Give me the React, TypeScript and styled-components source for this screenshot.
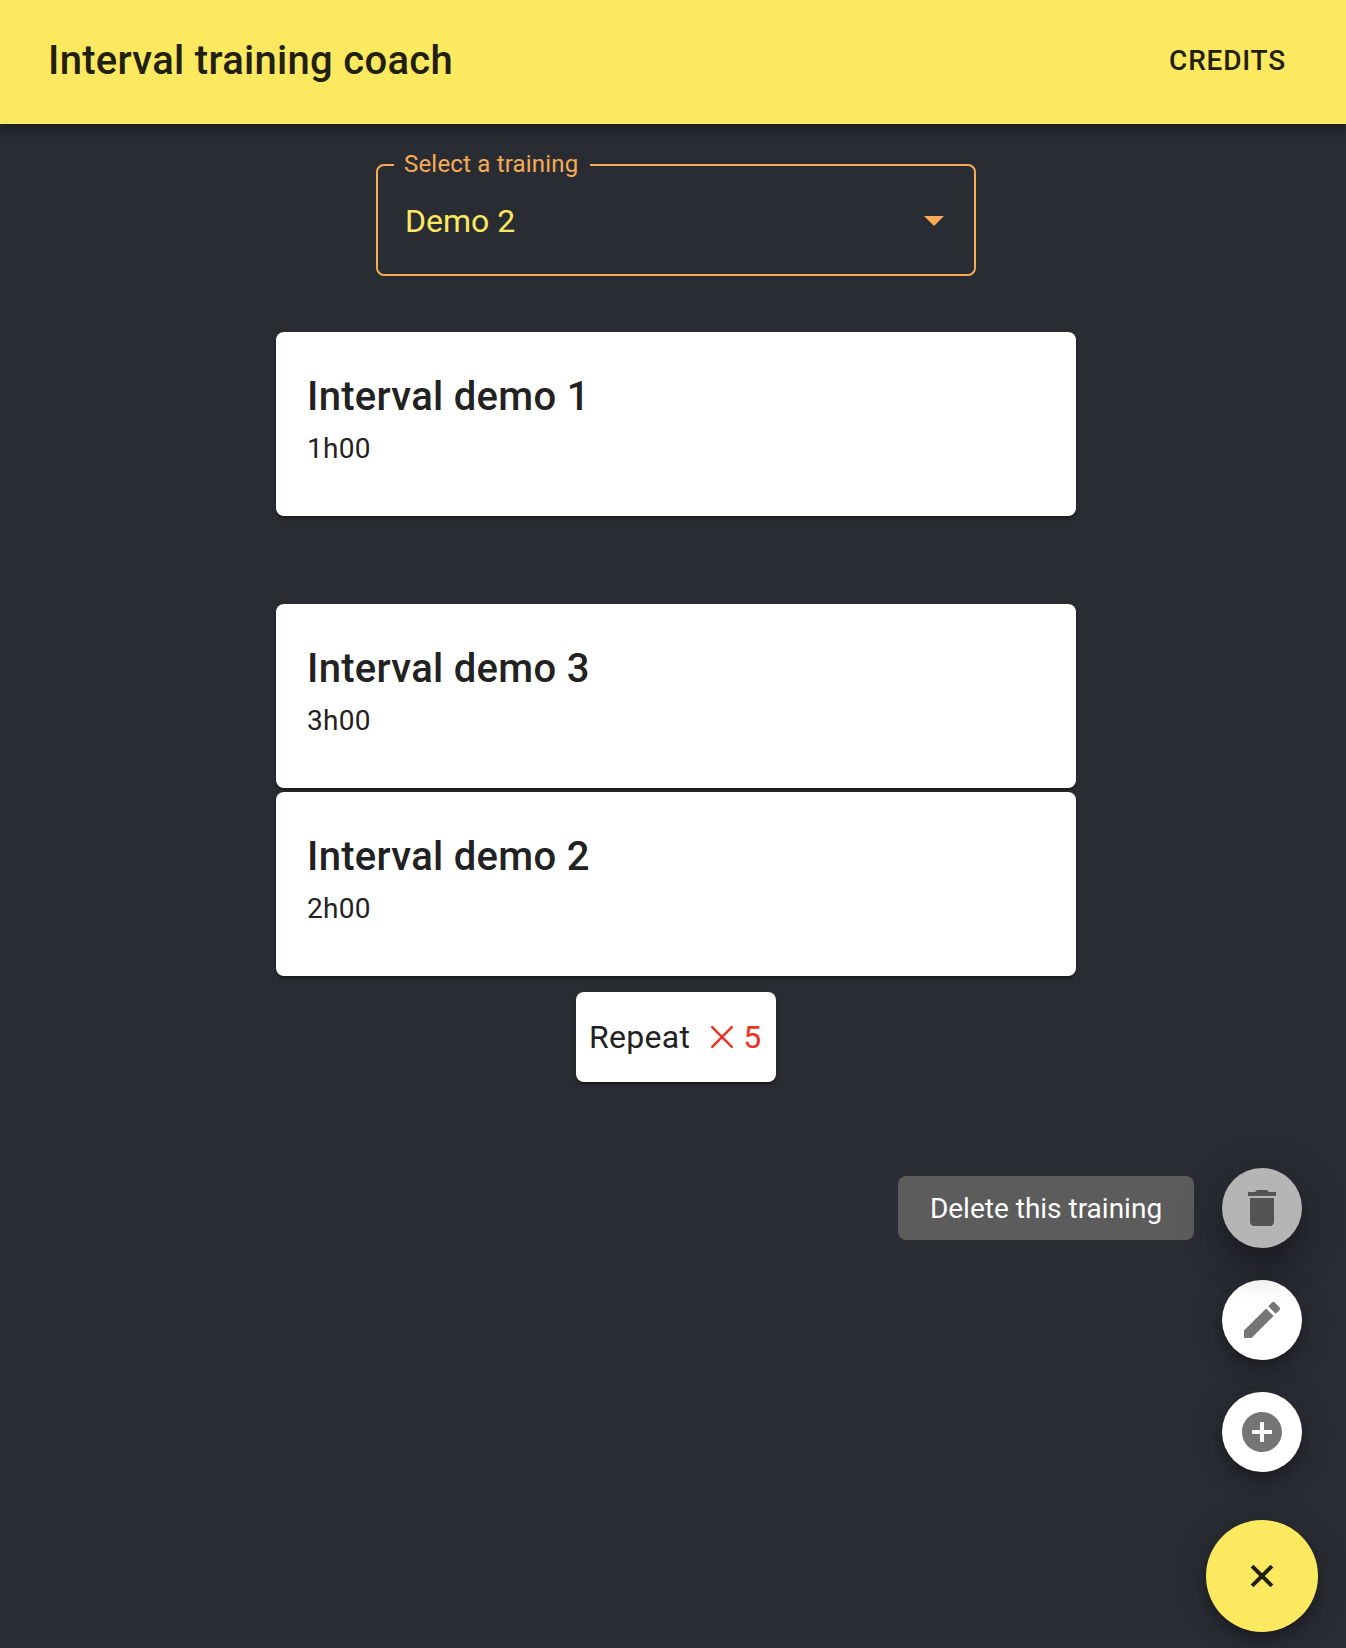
import React from "react";
import styled, { createGlobalStyle, css } from "styled-components";

const colors = {
  primary: "#fde960",
  secondary: "#f5ac52",
  background: "#2a2c34",
  text: "#222222",
  onPrimary: "#21200c",
  danger: "#ee3324",
};

const GlobalStyle = createGlobalStyle`
  *, *::before, *::after { box-sizing: border-box; }
  body {
    margin: 0;
    background: ${colors.background};
    color: ${colors.text};
    font-family: Roboto, "Liberation Sans", sans-serif;
    -webkit-font-smoothing: antialiased;
    overflow: hidden;
  }
`;

const Page = styled.div`
  position: relative;
  height: 1648px;
  width: 100%;
  overflow: hidden;
`;

const AppBar = styled.header`
  display: flex;
  align-items: center;
  justify-content: space-between;
  height: 124px;
  padding: 0 44px 3px 48px;
  background: ${colors.primary};
  color: ${colors.onPrimary};
  box-shadow: 0 4px 8px -2px rgba(0, 0, 0, 0.2), 0 8px 10px 0 rgba(0, 0, 0, 0.14),
    0 2px 20px 0 rgba(0, 0, 0, 0.12);
`;

const heading = css`
  margin: 0;
  font-size: 40px;
  font-weight: 500;
  line-height: 64px;
  letter-spacing: 0.0075em;
`;

const AppTitle = styled.h1`
  ${heading}
  padding-top: 1px;
`;

const CreditsButton = styled.button`
  border: 0;
  background: none;
  color: inherit;
  padding: 12px 16px 13px;
  font: 500 28px/49px Roboto, "Liberation Sans", sans-serif;
  letter-spacing: 0.02857em;
  text-transform: uppercase;
`;

const Main = styled.main`
  display: flex;
  flex-direction: column;
  align-items: center;
  padding: 31px 0 0 6px;
`;

const SelectField = styled.fieldset`
  width: 600px;
  height: 121px;
  margin: 0;
  padding: 0 30px 0 27px;
  border: 2px solid ${colors.secondary};
  border-radius: 8px;
`;

const SelectLabel = styled.legend`
  margin-left: -11px;
  padding: 0 11px 2px 10px;
  color: ${colors.secondary};
  font-size: 24px;
  line-height: 18px;
  letter-spacing: 0.008em;
  width: 196px;
  white-space: nowrap;
`;

const SelectRow = styled.div`
  display: flex;
  align-items: center;
  justify-content: space-between;
  height: 92px;
`;

const SelectValue = styled.span`
  color: ${colors.primary};
  font-size: 32px;
  line-height: 38px;
`;

const Arrow = styled.svg`
  width: 20px;
  height: 10px;
  fill: ${colors.secondary};
`;

const Group = styled.section<{ $top: number }>`
  display: flex;
  flex-direction: column;
  align-items: center;
  gap: 4px;
  margin-top: ${(p) => p.$top}px;
`;

const surface = css`
  background: #fff;
  border-radius: 8px;
  box-shadow: 0 4px 2px -2px rgba(0, 0, 0, 0.2), 0 2px 2px 0 rgba(0, 0, 0, 0.14),
    0 2px 6px 0 rgba(0, 0, 0, 0.12);
`;

const Card = styled.article`
  ${surface}
  width: 800px;
  height: 184px;
  padding: 33px 31px;
`;

const CardTitle = styled.h2`
  ${heading}
`;

const Duration = styled.p`
  margin: 0;
  font-size: 28px;
  line-height: 40px;
  letter-spacing: 0.01071em;
`;

const RepeatChip = styled.div`
  ${surface}
  display: flex;
  align-items: center;
  width: 200px;
  height: 90px;
  margin-top: 12px;
  padding: 0 12px 0 13px;
  font-size: 32px;
  letter-spacing: 0.00938em;
`;

const Count = styled.span`
  display: flex;
  align-items: center;
  gap: 9px;
  margin-left: 20px;
  color: ${colors.danger};
`;

const SpeedDial = styled.div`
  position: absolute;
  right: 28px;
  bottom: 16px;
  display: flex;
  flex-direction: column-reverse;
  align-items: flex-end;
`;

const Actions = styled.div`
  display: flex;
  flex-direction: column-reverse;
  align-items: flex-end;
  gap: 32px;
  margin: 0 16px 48px 0;
`;

const ActionRow = styled.div`
  display: flex;
  align-items: center;
  gap: 28px;
`;

const Tooltip = styled.span`
  width: 296px;
  height: 64px;
  border-radius: 8px;
  background: #5c5c5c;
  color: #fff;
  font-size: 28px;
  line-height: 65px;
  text-align: center;
  white-space: nowrap;
`;

const restShadow = `0 6px 10px -2px rgba(0,0,0,.2), 0 12px 20px 0 rgba(0,0,0,.14), 0 2px 36px 0 rgba(0,0,0,.12)`;
const pressedShadow = `0 14px 16px -8px rgba(0,0,0,.2), 0 24px 34px 4px rgba(0,0,0,.14), 0 10px 44px 8px rgba(0,0,0,.12)`;

const Fab = styled.button<{ $main?: boolean; $pressed?: boolean }>`
  position: relative;
  display: flex;
  align-items: center;
  justify-content: center;
  width: ${(p) => (p.$main ? 112 : 80)}px;
  height: ${(p) => (p.$main ? 112 : 80)}px;
  padding: 0;
  border: 0;
  border-radius: 50%;
  background: ${(p) => (p.$main ? colors.primary : p.$pressed ? "#b5b5b5" : "#fff")};
  color: ${(p) => (p.$main ? colors.onPrimary : p.$pressed ? "#535353" : "#757575")};
  box-shadow: ${(p) => (p.$pressed ? pressedShadow : restShadow)};
`;

const Icon = styled.svg<{ $turned?: boolean }>`
  width: 48px;
  height: 48px;
  fill: currentColor;
  transform: ${(p) => (p.$turned ? "rotate(45deg)" : "none")};
`;

const ADD = "M19 13h-6v6h-2v-6H5v-2h6V5h2v6h6v2z";

const actions = [
  {
    label: "Add a training",
    path: "M12 2C6.48 2 2 6.48 2 12s4.48 10 10 10 10-4.48 10-10S17.52 2 12 2zm5 11h-4v4h-2v-4H7v-2h4V7h2v4h4v2z",
  },
  {
    label: "Edit this training",
    path: "M3 17.25V21h3.75L17.81 9.94l-3.75-3.75L3 17.25zM20.71 7.04c.39-.39.39-1.02 0-1.41l-2.34-2.34a.9959.9959 0 0 0-1.41 0l-1.83 1.83 3.75 3.75 1.83-1.83z",
  },
  {
    label: "Delete this training",
    path: "M6 19c0 1.1.9 2 2 2h8c1.1 0 2-.9 2-2V7H6v12zM19 4h-3.5l-1-1h-5l-1 1H5v2h14V4z",
    active: true,
  },
];

function Interval({ title, duration }: { title: string; duration: string }) {
  return (
    <Card>
      <CardTitle>{title}</CardTitle>
      <Duration>{duration}</Duration>
    </Card>
  );
}

export default function App() {
  return (
    <>
      <GlobalStyle />
      <Page>
        <AppBar>
          <AppTitle>Interval training coach</AppTitle>
          <CreditsButton>Credits</CreditsButton>
        </AppBar>
        <Main>
          <SelectField>
            <SelectLabel>Select a training</SelectLabel>
            <SelectRow>
              <SelectValue>Demo 2</SelectValue>
              <Arrow viewBox="0 0 20 10">
                <path d="M0 0l10 10L20 0z" />
              </Arrow>
            </SelectRow>
          </SelectField>
          <Group $top={56}>
            <Interval title="Interval demo 1" duration="1h00" />
          </Group>
          <Group $top={88}>
            <Interval title="Interval demo 3" duration="3h00" />
            <Interval title="Interval demo 2" duration="2h00" />
            <RepeatChip>
              Repeat
              <Count>
                <svg
                  width="24"
                  height="24"
                  viewBox="0 0 24 24"
                  fill="none"
                  stroke="currentColor"
                  strokeWidth="2.5"
                  strokeLinecap="round"
                >
                  <path d="M2.2 2.2l19.6 19.6M21.8 2.2L2.2 21.8" />
                </svg>
                5
              </Count>
            </RepeatChip>
          </Group>
        </Main>
        <SpeedDial>
          <Fab $main aria-label="Close">
            <Icon viewBox="0 0 24 24" $turned>
              <path d={ADD} />
            </Icon>
          </Fab>
          <Actions>
            {actions.map((a) => (
              <ActionRow key={a.label}>
                {a.active && <Tooltip>{a.label}</Tooltip>}
                <Fab $pressed={a.active} aria-label={a.label}>
                  <Icon viewBox="0 0 24 24">
                    <path d={a.path} />
                  </Icon>
                </Fab>
              </ActionRow>
            ))}
          </Actions>
        </SpeedDial>
      </Page>
    </>
  );
}
